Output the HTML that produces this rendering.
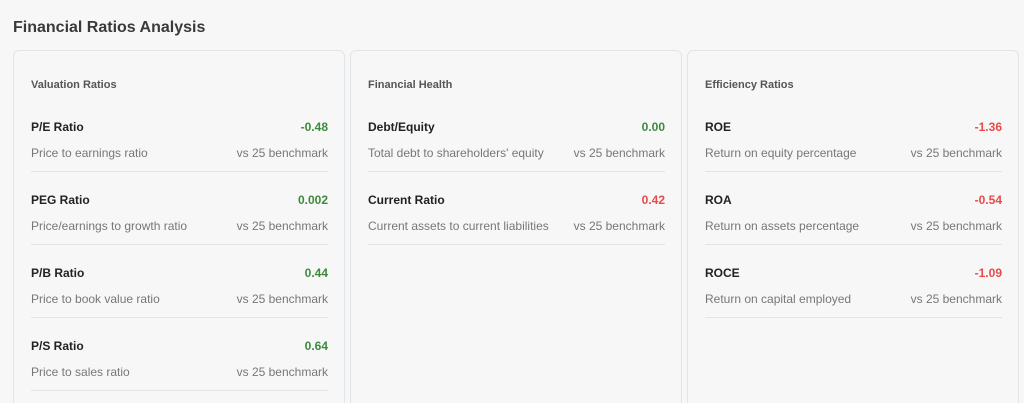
<!DOCTYPE html>
<html><head><style>
html,body{margin:0;width:1024px;height:403px;overflow:hidden}
body{background:#f6f7f6;font-family:"Liberation Sans",Arial,sans-serif;position:relative}
h1{position:absolute;left:13px;top:19px;margin:0;font-size:16px;font-weight:bold;color:#3a3a3a}
.card{position:absolute;top:50px;width:332px;height:360px;border:1px solid #e2e5e8;border-radius:6px;box-sizing:border-box;background:#f6f7f6}
.ct{position:absolute;left:17px;top:28px;font-size:11px;font-weight:bold;color:#555}
.row{position:absolute;left:17px;right:16px;height:52px;border-bottom:1px solid #e2e5e8;box-sizing:border-box}
.n{position:absolute;left:0;top:0;font-size:12px;font-weight:bold;color:#222}
.v{position:absolute;right:0;top:0;font-size:12px;font-weight:bold}
.d{position:absolute;left:0;top:26px;font-size:12px;color:#777}
.b{position:absolute;right:0;top:26px;font-size:12px;color:#777}
.g{color:#3d8a3d}.r{color:#e84a4a}
</style></head><body>
<h1>Financial Ratios Analysis</h1>
<div class="card" style="left:13px">
<div class="ct">Valuation Ratios</div>
<div class="row" style="top:69px"><span class="n">P/E Ratio</span><span class="v g">-0.48</span><span class="d">Price to earnings ratio</span><span class="b">vs 25 benchmark</span></div>
<div class="row" style="top:142px"><span class="n">PEG Ratio</span><span class="v g">0.002</span><span class="d">Price/earnings to growth ratio</span><span class="b">vs 25 benchmark</span></div>
<div class="row" style="top:215px"><span class="n">P/B Ratio</span><span class="v g">0.44</span><span class="d">Price to book value ratio</span><span class="b">vs 25 benchmark</span></div>
<div class="row" style="top:288px"><span class="n">P/S Ratio</span><span class="v g">0.64</span><span class="d">Price to sales ratio</span><span class="b">vs 25 benchmark</span></div>
</div>
<div class="card" style="left:350px">
<div class="ct">Financial Health</div>
<div class="row" style="top:69px"><span class="n">Debt/Equity</span><span class="v g">0.00</span><span class="d">Total debt to shareholders' equity</span><span class="b">vs 25 benchmark</span></div>
<div class="row" style="top:142px"><span class="n">Current Ratio</span><span class="v r">0.42</span><span class="d">Current assets to current liabilities</span><span class="b">vs 25 benchmark</span></div>
</div>
<div class="card" style="left:687px">
<div class="ct">Efficiency Ratios</div>
<div class="row" style="top:69px"><span class="n">ROE</span><span class="v r">-1.36</span><span class="d">Return on equity percentage</span><span class="b">vs 25 benchmark</span></div>
<div class="row" style="top:142px"><span class="n">ROA</span><span class="v r">-0.54</span><span class="d">Return on assets percentage</span><span class="b">vs 25 benchmark</span></div>
<div class="row" style="top:215px"><span class="n">ROCE</span><span class="v r">-1.09</span><span class="d">Return on capital employed</span><span class="b">vs 25 benchmark</span></div>
</div>
</body></html>
